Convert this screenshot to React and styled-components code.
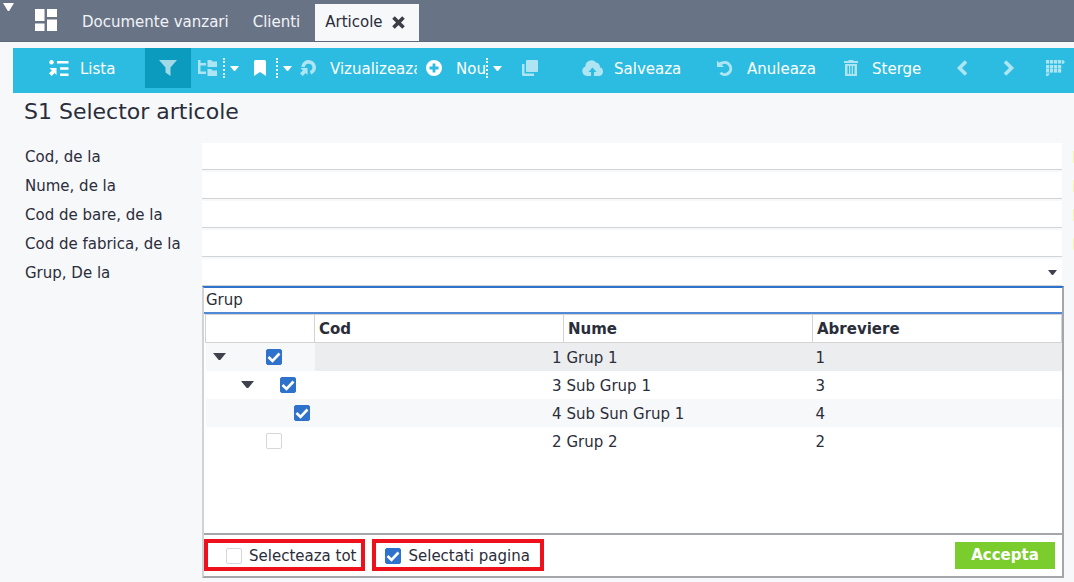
import React, { useState } from 'react'
import styled, { createGlobalStyle, css } from 'styled-components'

const colors = {
  bar: '#697386',
  page: '#f7f8fa',
  cyan: '#2cbce1',
  cyanDark: '#0a9bbf',
  text: '#2a2d3a',
  line: '#d2d3d6',
  blue: '#2f72cc',
  red: '#ee111c',
  green: '#7bcc2d',
}

const GlobalStyle = createGlobalStyle`
  * {
    box-sizing: border-box;
  }
  body {
    margin: 0;
    background: ${colors.page};
    color: ${colors.text};
    font: 15px/20px "DejaVu Sans", Verdana, sans-serif;
  }
  button, input, select {
    font: inherit;
    color: inherit;
  }
`

const TopBar = styled.header`
  display: flex;
  height: 42px;
  background: ${colors.bar};
  border-bottom: 1px solid #5f687c;
`

const MenuButton = styled.button`
  display: flex;
  align-items: flex-start;
  width: 35px;
  padding: 3px;
  border: 0;
  background: none;
`

const HomeButton = styled.button`
  display: flex;
  align-items: center;
  width: 35px;
  padding: 0 0 1px;
  border: 0;
  background: none;
`

const Tabs = styled.nav`
  display: flex;
  align-items: flex-end;
`

const Tab = styled.a`
  display: flex;
  align-items: center;
  gap: 9px;
  height: 37px;
  padding: 0 12px 1px;
  color: #f1f3f6;
  text-decoration: none;
  white-space: nowrap;
  ${props => props.$active && css`
    margin-left: 3px;
    padding: 0 14px 1px 10px;
    background: ${colors.page};
    color: ${colors.text};
  `}
`

const CloseButton = styled.button`
  display: flex;
  padding: 0;
  border: 0;
  background: none;
`

const Toolbar = styled.div`
  display: flex;
  height: 45px;
  margin: 6px 0 0 13px;
  padding-bottom: 5px;
  background: ${colors.cyan};
  overflow: hidden;
`

const Tool = styled.button`
  display: flex;
  flex: none;
  align-items: center;
  gap: ${props => props.$gap || 11}px;
  width: ${props => props.$width}px;
  padding: 0 0 0 ${props => props.$indent || 14}px;
  border: 0;
  background: ${props => props.$active ? colors.cyanDark : 'none'};
  color: #fff;
  white-space: nowrap;
  svg {
    flex: none;
    opacity: ${props => props.$dim ? 0.62 : 1};
  }
  span {
    padding-top: 2px;
    overflow: hidden;
  }
`

const SplitButton = styled.button`
  display: flex;
  flex: none;
  align-items: center;
  align-self: center;
  width: ${props => props.$width}px;
  height: 20px;
  padding: 0 0 0 5px;
  border: 0;
  border-left: 2px dotted #e4f6fb;
  background: none;
`

const Title = styled.h1`
  margin: 0;
  padding: 5px 24px 0;
  font-size: 22px;
  line-height: 28px;
  font-weight: 400;
`

const Form = styled.form`
  display: grid;
  grid-template-columns: 177px 1fr 12px;
  align-items: start;
  margin: 17px 0 0 25px;
`

const Label = styled.label`
  line-height: 29px;
`

const Marker = styled.i`
  grid-column: 3;
  justify-self: end;
  width: 1px;
  height: 12px;
  margin-top: 8px;
  background: #f5f7ae;
`

const field = css`
  display: block;
  width: 100%;
  height: 27px;
  margin: 0;
  padding: 0 4px;
  border: 0;
  border-bottom: 1px solid ${colors.line};
  border-radius: 0;
  background: #fff;
  outline: 0;
`

const TextField = styled.input`
  ${field}
`

const SelectWrap = styled.div`
  display: grid;
  align-items: center;
  svg {
    grid-area: 1 / 1;
    justify-self: end;
    margin-right: 5px;
    pointer-events: none;
  }
`

const SelectField = styled.select`
  ${field}
  grid-area: 1 / 1;
  appearance: none;
`

const Popup = styled.section`
  grid-column: 2;
  display: flex;
  flex-direction: column;
  min-height: 292px;
  margin: -2px -2px 0 0;
  border: 2px solid #a4a6a9;
  border-left-color: ${colors.line};
  border-top-color: ${colors.blue};
  background: #fff;
`

const SearchField = styled.input`
  ${field}
  height: 26px;
  padding: 0 2px;
  border-bottom: 2px solid #5089d6;
`

const Table = styled.table`
  width: calc(100% - 1px);
  margin: 0 0 0 1px;
  border-collapse: collapse;
  table-layout: fixed;
`

const Th = styled.th`
  width: ${props => props.$width || 'auto'};
  height: 28px;
  padding: 0 4px;
  border: 1px solid ${colors.line};
  text-align: left;
  font-weight: 700;
`

const Row = styled.tr`
  height: 28px;
  background: ${props => props.$striped ? colors.page : '#fff'};
`

const Td = styled.td`
  padding: 2px ${props => props.$right ? 2 : 4}px 0 3px;
  text-align: ${props => props.$right ? 'right' : 'left'};
  ${props => props.$selected && 'background: #ecedef;'}
`

const TreeTd = styled.td`
  padding: 0;
`

const TreeCell = styled.div`
  display: flex;
  align-items: center;
  justify-content: space-between;
  padding-left: ${props => 7 + props.$depth * 28}px;
  padding-right: ${props => 33 - props.$depth * 14}px;
`

const Expander = styled.button`
  display: flex;
  padding: 0;
  border: 0;
  background: none;
`

const Footer = styled.footer`
  display: flex;
  align-items: center;
  gap: 7px;
  margin: auto 0 0;
  padding: 4px 7px 5px 0;
  border-top: 2px solid #a4a6a9;
`

const Option = styled.label`
  display: flex;
  align-items: center;
  gap: 7px;
  height: 32px;
  padding: 2px ${props => props.$wide ? 10 : 5}px 0 ${props => props.$wide ? 9 : 18}px;
  border: 4px solid ${colors.red};
  white-space: nowrap;
`

const AcceptButton = styled.button`
  min-width: 100px;
  height: 27px;
  margin-left: auto;
  padding: 0 12px;
  border: 0;
  background: ${colors.green};
  color: #fff;
  font-weight: 700;
`

const CheckWrap = styled.span`
  display: grid;
  flex: none;
  svg {
    grid-area: 1 / 1;
    pointer-events: none;
  }
`

const CheckInput = styled.input`
  grid-area: 1 / 1;
  width: 16px;
  height: 16px;
  margin: 0;
  appearance: none;
  border: 1px solid #d6d7da;
  border-radius: 2px;
  background: #fff;
  &:checked {
    border-color: ${colors.blue};
    background: ${colors.blue};
  }
`

const Check = ({ defaultChecked, ...props }) => {
  const [checked, setChecked] = useState(!!defaultChecked)
  return (
    <CheckWrap>
      <CheckInput
        {...props}
        type='checkbox'
        checked={checked}
        onChange={e => setChecked(e.target.checked)}
      />
      {checked && (
        <svg width='16' height='16' viewBox='0 0 16 16' fill='none' stroke='#fff' strokeWidth='2.6'>
          <path d='M2.500 8L6.500 12L13.500 4.500' />
        </svg>
      )}
    </CheckWrap>
  )
}

const Caret = ({ width = 9, height = 5, color = '#fff' }) =>
  <svg width={width} height={height} viewBox='0 0 10 6' preserveAspectRatio='none' fill={color}>
    <path d='M0 0H10L5.6 6H4.4Z' />
  </svg>

const Icon = ({ width = 16, height = 16, children }) =>
  <svg width={width} height={height} viewBox={`0 0 ${width} ${height}`} fill='#fff'>
    {children}
  </svg>

const HomeIcon = () =>
  <Icon width={22} height={22}>
    <path d='M0 0H9.500V12H0ZM12 0H22V8H12ZM0 14.500H9.500V22H0ZM12 10.500H22V22H12Z' />
  </Icon>

const CloseIcon = () =>
  <svg width='13' height='13' viewBox='0 0 13 13' stroke='#3a3d46' strokeWidth='3.6'>
    <path d='M1.500 1.500L11.500 11.500M11.500 1.500L1.500 11.500' />
  </svg>

const ListIcon = () =>
  <Icon width={20}>
    <circle cx='2.5' cy='2.2' r='2.2' />
    <path d='M8 1H19.500V3.500H8ZM11 7.200H19.500V9.700H11ZM11 13.400H19.500V16H11Z' />
    <path d='M0.500 8H7.500V15L5.600 13.100L2.700 16L0 13.300L2.900 10.400Z' />
  </Icon>

const FilterIcon = () =>
  <Icon width={18}>
    <path d='M0 0H18L11.500 7.500V16L6.500 12.500V7.500Z' />
  </Icon>

const TreeIcon = () =>
  <Icon width={19}>
    <path d='M0 0H2.500V3H8V5.500H2.500V11.500H8V14H0Z' />
    <path d='M9.500 0H13L14.500 1.500H19V7H9.500ZM9.500 9H13L14.500 10.500H19V16H9.500Z' />
  </Icon>

const BookmarkIcon = () =>
  <Icon width={12}>
    <path d='M1.500 0H10.500Q12 0 12 1.500V16L6 12L0 16V1.500Q0 0 1.500 0Z' />
  </Icon>

const ViewIcon = () =>
  <Icon>
    <path d='M3 7A5.600 5.600 0 1 1 10.500 12.700' fill='none' stroke='#fff' strokeWidth='3.6' />
    <path d='M0.500 8H7.500V15L5.600 13.100L2.700 16L0 13.300L2.900 10.400Z' />
  </Icon>

const PlusIcon = () =>
  <Icon>
    <path fillRule='evenodd' d='M8 0A8 8 0 1 1 8 16A8 8 0 1 1 8 0ZM6.600 3.500V6.600H3.500V9.400H6.600V12.500H9.400V9.400H12.500V6.600H9.400V3.500Z' />
  </Icon>

const CopyIcon = () =>
  <Icon>
    <rect x='4' width='12' height='12' rx='1' />
    <path d='M0 4H2.500V13.500H12V16H1.500Q0 16 0 14.500Z' />
  </Icon>

const CloudIcon = () =>
  <Icon width={21}>
    <path fillRule='evenodd' d='M5 16A5 5 0 0 1 3.400 6.400A6 6 0 0 1 14 2.600A4 4 0 0 1 17.800 7.200A4.500 4.500 0 0 1 16.500 16H12V12H14.500L10.500 7.500L6.500 12H9V16Z' />
  </Icon>

const UndoIcon = () =>
  <Icon>
    <path d='M4 3.800A6 6 0 1 1 3.500 12.800' fill='none' stroke='#fff' strokeWidth='3' />
    <path d='M0 0.500L2 2.500L5 1.500L4.500 4.500L7 7H0Z' />
  </Icon>

const TrashIcon = () =>
  <Icon width={14}>
    <path d='M4.500 0H9.500V1H14V3H0V1H4.500Z' />
    <path fillRule='evenodd' d='M1 4H13V16H1ZM3.500 6V14H5V6ZM6.300 6V14H7.700V6ZM9 6V14H10.500V6Z' />
  </Icon>

const Chevron = ({ right }) =>
  <svg width='12' height='16' viewBox='0 0 12 16' fill='none' stroke='#fff' strokeWidth='3.6'>
    <path d={right ? 'M2 1.500L8.500 8L2 14.500' : 'M9 1.500L2.500 8L9 14.500'} />
  </svg>

const GridIcon = () =>
  <Icon width={19}>
    {[0, 5, 9].map(y => [0, 4, 8, 12].map(x => (
      <rect key={`${x}-${y}`} x={x} y={y} width='3.2' height='3.6' />
    )))}
    <path d='M16 0H17L19 2L17 4H16ZM0 13.500H4L2 16H0Z' />
  </Icon>

const groups = [
  { cod: 1, name: 'Grup 1', depth: 0, checked: true, open: true },
  { cod: 3, name: 'Sub Grup 1', depth: 1, checked: true, open: true },
  { cod: 4, name: 'Sub Sun Grup 1', depth: 2, checked: true },
  { cod: 2, name: 'Grup 2', depth: 0 },
]

const fields = [
  { id: 'cod', label: 'Cod, de la' },
  { id: 'nume', label: 'Nume, de la' },
  { id: 'bare', label: 'Cod de bare, de la' },
  { id: 'fabrica', label: 'Cod de fabrica, de la' },
]

const Header = () =>
  <TopBar>
    <MenuButton aria-label='Meniu'>
      <Caret width={11} height={8} />
    </MenuButton>
    <HomeButton aria-label='Acasa'>
      <HomeIcon />
    </HomeButton>
    <Tabs>
      <Tab href='#documente'>Documente vanzari</Tab>
      <Tab href='#clienti'>Clienti</Tab>
      <Tab as='div' $active>
        Articole
        <CloseButton aria-label='Inchide'>
          <CloseIcon />
        </CloseButton>
      </Tab>
    </Tabs>
  </TopBar>

const Tools = () =>
  <Toolbar>
    <Tool $width={132} $indent={36}><ListIcon /><span>Lista</span></Tool>
    <Tool $width={46} $active $dim aria-label='Filtru'><FilterIcon /></Tool>
    <Tool $width={32} $indent={7} $dim aria-label='Arbore'><TreeIcon /></Tool>
    <SplitButton $width={25} aria-label='Optiuni arbore'><Caret /></SplitButton>
    <Tool $width={28} $indent={6} aria-label='Favorite'><BookmarkIcon /></Tool>
    <SplitButton $width={18} aria-label='Optiuni favorite'><Caret /></SplitButton>
    <Tool $width={123} $indent={6} $gap={14} $dim><ViewIcon /><span>Vizualizeaza</span></Tool>
    <Tool $width={69} $indent={9} $gap={14}><PlusIcon /><span>Nou</span></Tool>
    <SplitButton $width={22} aria-label='Optiuni nou'><Caret /></SplitButton>
    <Tool $width={60} $dim aria-label='Copiaza'><CopyIcon /></Tool>
    <Tool $width={135} $dim><CloudIcon /><span>Salveaza</span></Tool>
    <Tool $width={127} $gap={14} $dim><UndoIcon /><span>Anuleaza</span></Tool>
    <Tool $width={113} $gap={14} $dim><TrashIcon /><span>Sterge</span></Tool>
    <Tool $width={46} $dim aria-label='Inapoi'><Chevron /></Tool>
    <Tool $width={43} $dim aria-label='Inainte'><Chevron right /></Tool>
    <Tool $width={42} $dim aria-label='Tabel'><GridIcon /></Tool>
  </Toolbar>

const GroupRow = ({ group, index }) =>
  <Row $striped={index % 2 === 0}>
    <TreeTd>
      <TreeCell $depth={group.depth}>
        {group.open ? (
          <Expander type='button' aria-label='Restrange'>
            <Caret width={13} height={7} color='#3f424c' />
          </Expander>
        ) : <span />}
        <Check aria-label={group.name} defaultChecked={group.checked} />
      </TreeCell>
    </TreeTd>
    <Td $right $selected={index === 0}>{group.cod}</Td>
    <Td $selected={index === 0}>{group.name}</Td>
    <Td $selected={index === 0}>{group.cod}</Td>
  </Row>

const GroupPopup = () =>
  <Popup>
    <SearchField aria-label='Cauta' defaultValue='Grup' />
    <Table>
      <thead>
        <tr>
          <Th $width='109px' aria-label='Selectie' />
          <Th>Cod</Th>
          <Th>Nume</Th>
          <Th>Abreviere</Th>
        </tr>
      </thead>
      <tbody>
        {groups.map((group, i) => (
          <GroupRow key={group.cod} group={group} index={i} />
        ))}
      </tbody>
    </Table>
    <Footer>
      <Option>
        <Check />
        Selecteaza tot
      </Option>
      <Option $wide>
        <Check defaultChecked />
        Selectati pagina
      </Option>
      <AcceptButton type='button'>Accepta</AcceptButton>
    </Footer>
  </Popup>

const App = () =>
  <React.Fragment>
    <GlobalStyle />
    <Header />
    <Tools />
    <Title>S1 Selector articole</Title>
    <Form onSubmit={e => e.preventDefault()}>
      {fields.map(({ id, label }) => (
        <React.Fragment key={id}>
          <Label htmlFor={id}>{label}</Label>
          <TextField id={id} />
          <Marker />
        </React.Fragment>
      ))}
      <Label htmlFor='grup'>Grup, De la</Label>
      <SelectWrap>
        <SelectField id='grup' />
        <Caret color='#3f424c' />
      </SelectWrap>
      <GroupPopup />
    </Form>
  </React.Fragment>

export default App
